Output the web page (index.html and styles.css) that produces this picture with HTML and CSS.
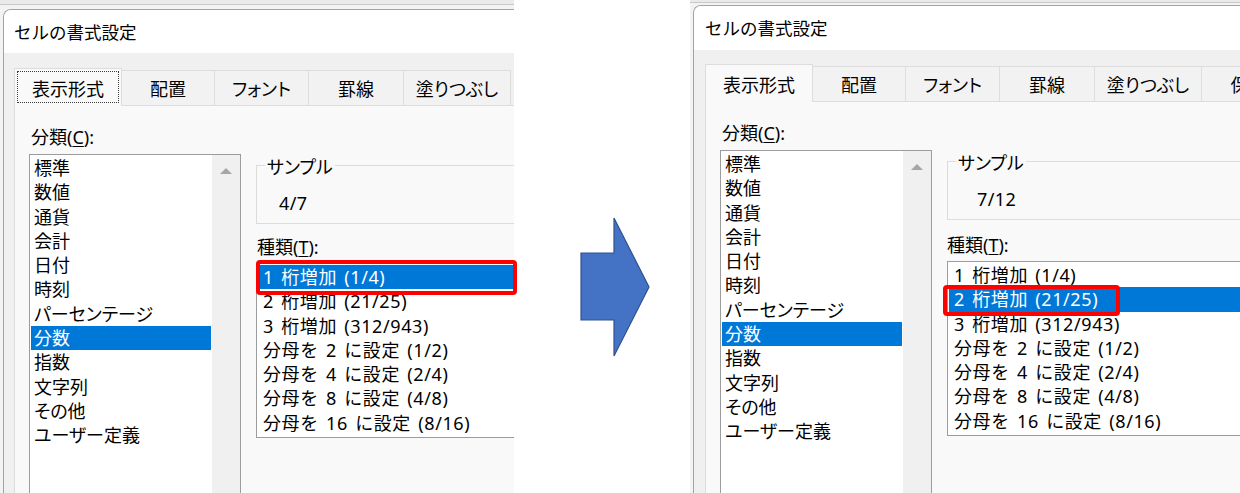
FILE: index.html
```html
<!DOCTYPE html>
<html lang="ja">
<head>
<meta charset="utf-8">
<title>セルの書式設定</title>
<link rel="stylesheet" href="styles.css">
</head>
<body>
<div class="page">
  <section class="shot shot-l">
    <div class="shot-top"></div>
    <div class="shot-main">
      <div class="dialog">
        <div class="titlebar">セルの書式設定</div>
        <div class="dbody">
          <div class="tabs">
            <div class="tab tab-sel t1 focus">表示形式</div>
            <div class="tab t2">配置</div>
            <div class="tab t3">フォント</div>
            <div class="tab t4">罫線</div>
            <div class="tab t5">塗りつぶし</div>
          </div>
          <div class="panel">
            <div class="col-cat">
              <div class="lbl">分類(<u>C</u>):</div>
              <div class="catlist">
                <ul class="items">
                  <li>標準</li>
                  <li>数値</li>
                  <li>通貨</li>
                  <li>会計</li>
                  <li>日付</li>
                  <li>時刻</li>
                  <li>パーセンテージ</li>
                  <li class="sel">分数</li>
                  <li>指数</li>
                  <li>文字列</li>
                  <li>その他</li>
                  <li>ユーザー定義</li>
                </ul>
                <div class="scroll"><span class="up"></span></div>
              </div>
            </div>
            <div class="col-type">
              <fieldset class="sample">
                <legend>サンプル</legend>
                <div class="sample-val">4/7</div>
              </fieldset>
              <div class="lbl lbl-type">種類(<u>T</u>):</div>
              <ul class="typelist">
                <li class="sel">1 桁増加 (1/4)</li>
                <li>2 桁増加 (21/25)</li>
                <li>3 桁増加 (312/943)</li>
                <li>分母を 2 に設定 (1/2)</li>
                <li>分母を 4 に設定 (2/4)</li>
                <li>分母を 8 に設定 (4/8)</li>
                <li>分母を 16 に設定 (8/16)</li>
              </ul>
            </div>
          </div>
        </div>
      </div>
    </div>
    <div class="mark"></div>
  </section>

  <div class="mid">
    <svg width="72" height="142" viewBox="0 0 72 142" aria-hidden="true">
      <polygon points="1,36 34,36 34,1 69,70 34,139 34,103 1,103" fill="#4472c4" stroke="#2f528f" stroke-width="1.2" stroke-linejoin="miter"/>
    </svg>
  </div>

  <section class="shot shot-r">
    <div class="shot-top"></div>
    <div class="shot-main">
      <div class="dialog">
        <div class="titlebar">セルの書式設定</div>
        <div class="dbody">
          <div class="tabs">
            <div class="tab tab-sel t1">表示形式</div>
            <div class="tab t2">配置</div>
            <div class="tab t3">フォント</div>
            <div class="tab t4">罫線</div>
            <div class="tab t5">塗りつぶし</div>
            <div class="tab t6">保護</div>
          </div>
          <div class="panel">
            <div class="col-cat">
              <div class="lbl">分類(<u>C</u>):</div>
              <div class="catlist">
                <ul class="items">
                  <li>標準</li>
                  <li>数値</li>
                  <li>通貨</li>
                  <li>会計</li>
                  <li>日付</li>
                  <li>時刻</li>
                  <li>パーセンテージ</li>
                  <li class="sel">分数</li>
                  <li>指数</li>
                  <li>文字列</li>
                  <li>その他</li>
                  <li>ユーザー定義</li>
                </ul>
                <div class="scroll"><span class="up"></span></div>
              </div>
            </div>
            <div class="col-type">
              <fieldset class="sample">
                <legend>サンプル</legend>
                <div class="sample-val">7/12</div>
              </fieldset>
              <div class="lbl lbl-type">種類(<u>T</u>):</div>
              <ul class="typelist">
                <li>1 桁増加 (1/4)</li>
                <li class="sel">2 桁増加 (21/25)</li>
                <li>3 桁増加 (312/943)</li>
                <li>分母を 2 に設定 (1/2)</li>
                <li>分母を 4 に設定 (2/4)</li>
                <li>分母を 8 に設定 (4/8)</li>
                <li>分母を 16 に設定 (8/16)</li>
              </ul>
            </div>
          </div>
        </div>
      </div>
    </div>
    <div class="mark"></div>
  </section>
</div>
</body>
</html>
```

FILE: styles.css
```css
* { box-sizing: border-box; }

html, body { margin: 0; padding: 0; }

body {
  width: 1240px;
  height: 493px;
  overflow: hidden;
  background: #ffffff;
  color: #000000;
  font-family: "Noto Sans", "Noto Sans CJK JP", sans-serif;
  font-size: 18px;
}

.page {
  display: flex;
  height: 493px;
}

/* screenshot frames */
.shot {
  position: relative;
  flex: none;
  display: flex;
  flex-direction: column;
  height: 493px;
  background: #ececec;
}
.shot-l { width: 514px; }
.shot-r { width: 550px; }

.shot-top {
  flex: none;
  height: 5px;
  background: #eaeaea;
  border-bottom: 1px solid #c9c9c9;
}
.shot-r .shot-top { height: 3px; }

.shot-main {
  flex: 1;
  min-height: 0;
  display: flex;
  padding: 4px 0 0 3px;
  background: #f3f3f3;
}
.shot-r .shot-main { padding-top: 2px; }

/* dialog */
.dialog {
  flex: 1;
  min-width: 0;
  display: flex;
  flex-direction: column;
  overflow: hidden;
  background: #f0f0f0;
  border-top: 1px solid #a2a2a2;
  border-left: 1px solid #a2a2a2;
  border-top-left-radius: 8px;
}

.titlebar {
  flex: none;
  height: 43px;
  display: flex;
  align-items: center;
  padding-left: 10px;
  background: #ffffff;
  font-family: "Noto Sans CJK JP", sans-serif;
  font-size: 17.5px;
  line-height: 24px;
}
.shot-r .titlebar { height: 44px; padding-left: 11px; }

.dbody {
  flex: 1;
  min-height: 0;
  display: flex;
  flex-direction: column;
  padding: 15px 0 0 10px;
}
.shot-r .dbody { padding: 14px 0 0 11px; }

/* tabs */
.tabs {
  flex: none;
  display: flex;
  align-items: flex-end;
  height: 37px;
}
.tab {
  flex: none;
  height: 35px;
  display: flex;
  align-items: center;
  justify-content: center;
  background: #f2f2f2;
  border-top: 1px solid #dddddd;
  border-right: 1px solid #dddddd;
  font-family: "Noto Sans CJK JP", sans-serif;
  font-feature-settings: "palt" 1;
  font-size: 18px;
  line-height: 24px;
  white-space: nowrap;
}
.tab-sel {
  position: relative;
  z-index: 1;
  height: 38px;
  margin-bottom: -1px;
  background: #f9f9f9;
  border-left: 1px solid #dddddd;
}
.focus {
  outline: 1px dotted #3c3c3c;
  outline-offset: -4px;
}

.t1 { width: 108px; }
.t2 { width: 93px; }
.t3 { width: 94px; }
.t4 { width: 95px; }
.t5 { width: 107px; }
.t6 { width: 94px; }

/* tab panel */
.panel {
  flex: 1;
  min-height: 0;
  display: flex;
  background: #f9f9f9;
  border-top: 1px solid #dddddd;
  border-left: 1px solid #dddddd;
  padding-left: 14px;
}

.lbl {
  margin-top: 19px;
  padding-left: 2px;
  line-height: 24px;
  white-space: nowrap;
}
.lbl u { text-underline-offset: 2px; }

.col-cat {
  flex: none;
  width: 212px;
}

.catlist {
  margin-top: 5px;
  height: 360px;
  display: flex;
  border: 1px solid #9c9c9c;
  background: #ffffff;
}
.items {
  flex: 1;
  list-style: none;
  margin: 0;
  padding: 1px;
  font-feature-settings: "palt" 1;
}
.items li {
  height: 24.3px;
  line-height: 24.3px;
  padding-left: 3px;
  white-space: nowrap;
}
.sel {
  background: #0078d7;
  color: #ffffff;
}
.scroll {
  flex: none;
  width: 28px;
  display: flex;
  align-items: flex-start;
  justify-content: center;
  padding-top: 13px;
  background: #f0f0f0;
}
.up {
  width: 0;
  height: 0;
  border-left: 6px solid transparent;
  border-right: 6px solid transparent;
  border-bottom: 6px solid #a6a6a6;
}

.col-type {
  flex: none;
  width: 420px;
  margin-left: 15px;
}

.sample {
  margin: 45px 0 0 0;
  padding: 12px 0 8px 0;
  min-width: 0;
  border: 1px solid #dcdcdc;
}
.sample legend {
  margin-left: 8px;
  padding: 4px 2px 0;
  line-height: 24px;
  font-feature-settings: "palt" 1;
}
.sample-val {
  padding-left: 22px;
  line-height: 24px;
  letter-spacing: 0.4px;
}
.shot-r .sample-val { padding-left: 29px; }

.lbl-type {
  margin-top: 11px;
  padding-left: 1px;
}
.shot-r .lbl-type { margin-top: 13px; padding-left: 0; }

.typelist {
  list-style: none;
  margin: 4px 0 0 0;
  padding: 1px 1px 2px;
  border: 1px solid #9c9c9c;
  background: #ffffff;
}
.typelist li {
  height: 24.3px;
  line-height: 24.3px;
  padding-left: 5px;
  white-space: nowrap;
  letter-spacing: 0.6px;
  word-spacing: 2px;
}

/* red annotation rectangles drawn over the screenshots */
.mark {
  position: absolute;
  border: 4px solid #ff0000;
  border-radius: 4px;
  z-index: 5;
}
.shot-l .mark { left: 256px; top: 260px; width: 261px; height: 35px; }
.shot-r .mark { left: 253px; top: 285px; width: 177px; height: 31px; }

/* arrow column */
.mid {
  flex: none;
  width: 176px;
  padding: 217px 0 0 66px;
}
.mid svg { display: block; }
```
